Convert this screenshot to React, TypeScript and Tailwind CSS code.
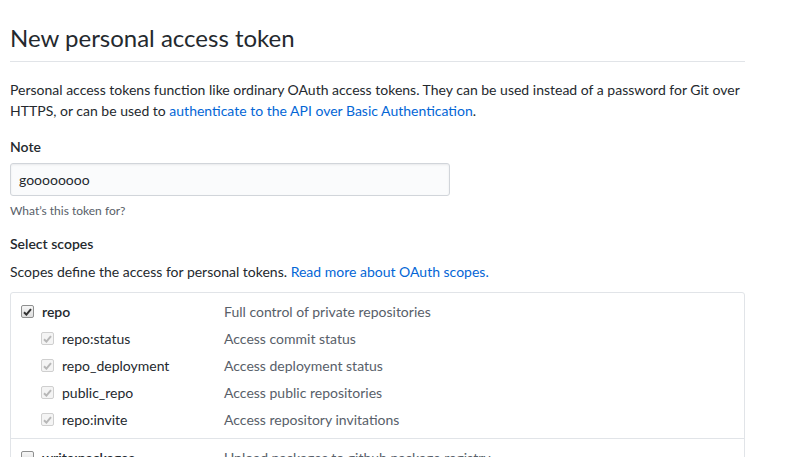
import React from "react";

const font = { fontFamily: '"Segoe UI", Lato, "Noto Sans", sans-serif' };

function Box({ checked, disabled }: { checked: boolean; disabled?: boolean }) {
  return (
    <span
      className={`flex h-[13px] w-[13px] shrink-0 items-center justify-center rounded-[2px] border ${
        disabled ? "border-[#cfcfcf] bg-[#f4f4f4]" : "border-[#8e8f8f] bg-gradient-to-b from-[#f6f6f6] to-[#dedede]"
      }`}
    >
      {checked && (
        <svg width="9" height="8" viewBox="0 0 9 8">
          <path
            d="M1 4.2 L3.4 6.6 L8 1.2"
            fill="none"
            stroke={disabled ? "#b7b7b7" : "#333"}
            strokeWidth="2"
          />
        </svg>
      )}
    </span>
  );
}

const subs = [
  ["repo:status", "Access commit status"],
  ["repo_deployment", "Access deployment status"],
  ["public_repo", "Access public repositories"],
  ["repo:invite", "Access repository invitations"],
];

export default function App() {
  return (
    <div className="min-h-[457px] w-[795px] overflow-hidden bg-white pl-[10px] text-[14px] text-[#24292e]" style={font}>
      <div className="w-[735px]">
        <div className="border-b border-[#e1e4e8] pt-[23px] pb-[8px]">
          <h1 className="text-[24px] font-normal leading-[30px]">New personal access token</h1>
        </div>
        <p className="mt-[17px] leading-[21px]">
          Personal access tokens function like ordinary OAuth access tokens. They can be used instead of a password for Git over
          HTTPS, or can be used to <span className="text-[#0366d6]">authenticate to the API over Basic Authentication</span>.
        </p>
        <div className="mt-[15px] font-semibold leading-[21px]">Note</div>
        <div className="mt-[6px] flex h-[33px] w-[440px] items-center rounded-[3px] border border-[#d1d5da] bg-[#fafbfc] px-[8px] shadow-[inset_0_1px_2px_rgba(27,31,35,0.075)]">
          goooooooo
        </div>
        <div className="mt-[6px] text-[12px] leading-[18px] text-[#586069]">What’s this token for?</div>
        <div className="mt-[13px] font-semibold leading-[21px]">Select scopes</div>
        <p className="mt-[7px] leading-[21px]">
          Scopes define the access for personal tokens. <span className="text-[#0366d6]">Read more about OAuth scopes.</span>
        </p>
        <div className="mt-[10px] rounded-[3px] border border-[#e1e4e8]">
          <div className="border-b border-[#e1e4e8] pt-[5px] pb-[5px] pl-[10px]">
            <div className="grid h-[27px] grid-cols-[203px_1fr] items-center">
              <div className="flex items-center gap-[8px]">
                <Box checked />
                <span className="font-semibold">repo</span>
              </div>
              <span className="text-[#586069]">Full control of private repositories</span>
            </div>
            {subs.map(([n, d]) => (
              <div key={n} className="grid h-[27px] grid-cols-[203px_1fr] items-center">
                <div className="flex items-center gap-[8px] pl-[20px]">
                  <Box checked disabled />
                  <span>{n}</span>
                </div>
                <span className="text-[#586069]">{d}</span>
              </div>
            ))}
          </div>
          <div className="pt-[5px] pl-[10px]">
            <div className="grid h-[27px] grid-cols-[203px_1fr] items-center">
              <div className="flex items-center gap-[8px]">
                <Box checked={false} />
                <span className="font-semibold">write:packages</span>
              </div>
              <span className="text-[#586069]">Upload packages to github package registry</span>
            </div>
          </div>
        </div>
      </div>
    </div>
  );
}
